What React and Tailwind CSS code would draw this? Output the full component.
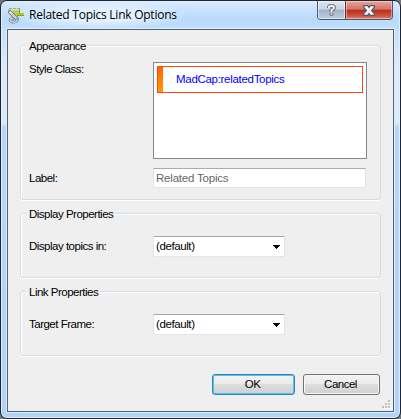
const GroupBox = ({ title, height, gap, children }) => (
  <fieldset className={`relative ml-3 w-[361px] ${height} ${gap}`}>
    <div className="absolute inset-x-0 top-[6px] bottom-0 rounded-[3px] border border-[#d3dde7] shadow-[inset_1px_1px_0_#fff,0_1px_0_#fff]" />
    <legend className="absolute top-0 left-[6px] h-[14px] bg-[#efefef] pr-[2px] pl-[3px] leading-[14px] whitespace-nowrap">{title}</legend>
    {children}
  </fieldset>
);

const Row = ({ label, className, children }) => (
  <div className={`relative flex items-start ${className}`}>
    <div className="w-[133px] shrink-0 pl-[9px] leading-[14px] whitespace-nowrap">{label}</div>
    {children}
  </div>
);

const Select = ({ value }) => (
  <div className="flex h-[21px] w-[132px] items-center justify-between rounded-[1px] border border-[#dfe4ee] border-t-[#a5a6ae] bg-white pr-[4px] pl-[2px]">
    <span className="pb-[2px] leading-[14px] tracking-[-0.4px]">{value}</span>
    <svg width="7" height="4" viewBox="0 0 7 4" shapeRendering="crispEdges">
      <path d="M0 0h7v1h-1v1h-1v1h-1v1h-1v-1h-1v-1h-1v-1h-1z" fill="#000" />
    </svg>
  </div>
);

const AppIcon = () => (
  <svg width="18" height="18" viewBox="0 0 18 18">
    <path d="M2 1.500h12" stroke="#a5b638" strokeWidth="1" strokeDasharray="3 1" />
    <path d="M1 3.500h3M6 4.500h7" stroke="#b4cd24" strokeWidth="2" />
    <path d="M5 7h12" stroke="#b4cd24" strokeWidth="2.400" />
    <path d="M12.500 2v5M10 8.500h7" stroke="#8c9e1c" strokeWidth="1" />
    <path d="M3 5L10 12" stroke="#777b82" strokeWidth="4" strokeLinecap="round" />
    <path d="M3 5L10 12" stroke="#e9eaec" strokeWidth="2" strokeLinecap="round" />
    <path d="M5 7l5 5" stroke="#9fa2a8" strokeWidth=".6" />
    <path d="M10 12c1 4-6 4-7 1q0-2 3-1" fill="none" stroke="#7d8d9d" strokeWidth="2.800" strokeLinecap="round" />
    <path d="M10 12c1 4-6 4-7 1q0-2 3-1" fill="none" stroke="#d3dce5" strokeWidth="1.100" strokeLinecap="round" />
  </svg>
);

const ButtonBase = "flex h-[21px] items-center justify-center rounded-[3px] border bg-[linear-gradient(#f3f3f3_0%,#ebebeb_48%,#dddddd_50%,#cfcfcf_100%)]";

export default function App() {
  return (
    <div className="h-[419px] w-[401px] overflow-hidden bg-[#70757a] font-['Liberation_Sans',sans-serif] text-[11.5px] tracking-[-0.5px] text-black">
      <div className="flex h-[419px] flex-col rounded-[7px] border border-[#20252f] bg-[linear-gradient(#d8eaff_0px,#b9dafc_18px,#c7e1fb_35px,#dce9f8_60px,#dce9f8_122px,#b5d6fa_126px,#b0d3f7_100%)] px-[6px] shadow-[inset_0_0_0_1px_#e1effb]">
        <header className="flex h-[28px] shrink-0 items-start justify-between">
          <div className="flex h-[28px] items-center bg-[radial-gradient(ellipse_at_center,#e4f1ff_30%,transparent_72%)] pr-3">
            <div className="mt-[1px]"><AppIcon /></div>
            <h1 className="ml-[4px] font-['Open_Sans'] text-[12px] leading-[16px] font-normal tracking-[-0.25px] whitespace-nowrap">Related Topics Link Options</h1>
          </div>
          <div className="mr-px flex h-[19px] w-[76px] overflow-hidden rounded-b-[4px] border border-t-0 border-[#4d5968]">
            <button className="flex w-[27px] items-center justify-center bg-[linear-gradient(#dce7f3_0%,#c5d3e2_46%,#9fb1c6_50%,#bdd0e3_100%)] shadow-[inset_0_0_0_1px_#ffffff88]">
              <svg width="9" height="13" viewBox="0 0 9 13" fill="none">
                <path d="M2 4V3q0-1 2.500-1T7 3.500Q7 5 4.500 6.200V8M4.500 9v2.500" stroke="#555b68" strokeWidth="3.600" />
                <path d="M2 4V3q0-1 2.500-1T7 3.500Q7 5 4.500 6.200V8M4.500 9.200v1.600" stroke="#f8f9fb" strokeWidth="1.900" />
              </svg>
            </button>
            <button className="flex flex-1 items-center justify-center border-l border-[#65313a] bg-[linear-gradient(#e7a69b_0%,#d47365_46%,#b72d1a_50%,#ce513a_80%,#e28168_100%)] shadow-[inset_0_0_0_1px_#ffffff66]">
              <svg width="12" height="11" viewBox="0 0 12 11">
                <path d="M.7.7h4L6 2.500 7.300.7h4v1.800L8.500 5.500l2.800 3v1.800h-4L6 8.500 4.700 10.300h-4V8.500l2.800-3L.7 2.500z" fill="#f6f6f8" stroke="#565968" strokeWidth="1.200" />
              </svg>
            </button>
          </div>
        </header>

        <main className="relative h-[383px] w-[387px] shrink-0 border border-[#53616f] bg-[#efefef] pt-[9px] shadow-[0_0_0_1px_#d9f0fa]">
          <GroupBox title="Appearance" height="h-[161px]" gap="">
            <Row label={<span className="block">Style Class:</span>} className="pt-[23px]">
              <div className="h-[97px] w-[214px] border border-[#82878f] bg-white p-[3px]">
                <div className="flex h-[27px] w-[206px] items-center border border-[#fc4a0c]">
                  <div className="h-full w-[5px] bg-[linear-gradient(#ff6500,#ff9a00)]" />
                  <span className="ml-[13px] tracking-[-0.3px] text-[#0000ff]">MadCap:relatedTopics</span>
                </div>
              </div>
            </Row>
            <Row label={<span className="block pt-[3px]">Label:</span>} className="pt-[9px]">
              <div className="h-[20px] w-[213px] rounded-[1px] border border-[#dfe2e8] border-t-[#a9abb2] bg-white pl-[2px] leading-[18px] tracking-[-0.2px] text-[#666]">Related Topics</div>
            </Row>
          </GroupBox>
          <GroupBox title="Display Properties" height="h-[71px]" gap="mt-[7px]">
            <Row label={<span className="block pt-[3px]">Display topics in:</span>} className="pt-[29px]"><Select value="(default)" /></Row>
          </GroupBox>
          <GroupBox title="Link Properties" height="h-[71px]" gap="mt-[7px]">
            <Row label={<span className="block pt-[3px]">Target Frame:</span>} className="pt-[29px]"><Select value="(default)" /></Row>
          </GroupBox>
          <footer className="mt-[18px] flex justify-end gap-2 pr-[13px]">
            <button className={`${ButtonBase} w-[83px] border-[#3c7fb1] pr-[2px] shadow-[inset_0_0_0_1px_#48c8ed]`}>OK</button>
            <button className={`${ButtonBase} w-[77px] border-[#707070] pr-[2px] shadow-[inset_0_0_0_1px_#f8f8f8]`}>Cancel</button>
          </footer>
          <svg className="absolute right-[2px] bottom-[2px]" width="9" height="9" viewBox="0 0 9 9" shapeRendering="crispEdges">
            <path d="M7 1h2v2h-2zM4 4h2v2H4zM7 4h2v2H7zM1 7h2v2H1zM4 7h2v2H4zM7 7h2v2H7z" fill="#fff" />
            <path d="M6 0h2v2H6zM3 3h2v2H3zM6 3h2v2H6zM0 6h2v2H0zM3 6h2v2H3zM6 6h2v2H6z" fill="#bdbdbd" />
          </svg>
        </main>
      </div>
    </div>
  );
}
